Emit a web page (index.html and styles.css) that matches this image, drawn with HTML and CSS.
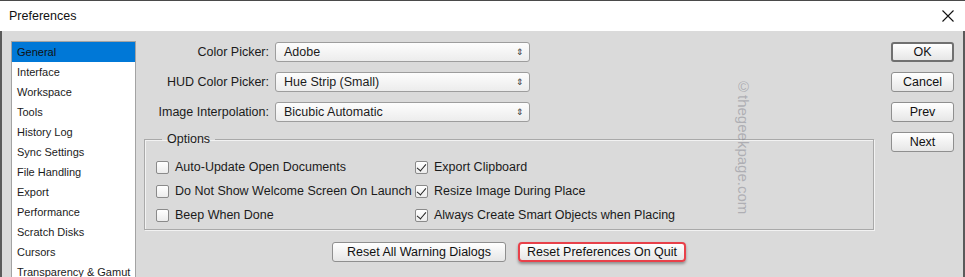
FILE: index.html
```html
<!DOCTYPE html>
<html lang="en">
<head>
    <meta charset="UTF-8">
    <title>Preferences</title>
    <link rel="stylesheet" href="styles.css">
</head>
<body>
    <div class="window">
        <div class="titlebar">
            <span class="title">Preferences</span>
            <svg class="close" width="12" height="12" viewBox="0 0 12 12"><path d="M0.5 0.5 L11.5 11.5 M11.5 0.5 L0.5 11.5" stroke="#111" stroke-width="1.1" fill="none"/></svg>
        </div>
        <div class="content">
            <ul class="sections">
                <li class="active">General</li>
                <li>Interface</li>
                <li>Workspace</li>
                <li>Tools</li>
                <li>History Log</li>
                <li>Sync Settings</li>
                <li>File Handling</li>
                <li>Export</li>
                <li>Performance</li>
                <li>Scratch Disks</li>
                <li>Cursors</li>
                <li>Transparency &amp; Gamut</li>
            </ul>

            <div class="main">
                <div class="field">
                    <label>Color Picker:</label>
                    <div class="select">Adobe <span class="arrow">&#8661;</span></div>
                </div>
                <div class="field">
                    <label>HUD Color Picker:</label>
                    <div class="select">Hue Strip (Small) <span class="arrow">&#8661;</span></div>
                </div>
                <div class="field">
                    <label>Image Interpolation:</label>
                    <div class="select">Bicubic Automatic <span class="arrow">&#8661;</span></div>
                </div>

                <fieldset class="options">
                    <legend>Options</legend>
                    <div class="checks">
                        <div class="check"><span class="box"></span>Auto-Update Open Documents</div>
                        <div class="check"><span class="box on"></span>Export Clipboard</div>
                        <div class="check"><span class="box"></span>Do Not Show Welcome Screen On Launch</div>
                        <div class="check"><span class="box on"></span>Resize Image During Place</div>
                        <div class="check"><span class="box"></span>Beep When Done</div>
                        <div class="check"><span class="box on"></span>Always Create Smart Objects when Placing</div>
                    </div>
                </fieldset>

                <div class="resets">
                    <button class="btn reset-warn">Reset All Warning Dialogs</button>
                    <button class="btn reset-prefs">Reset Preferences On Quit</button>
                </div>

                <div class="watermark">&copy;thegeekpage.com</div>
            </div>

            <div class="side">
                <button class="btn default">OK</button>
                <button class="btn">Cancel</button>
                <button class="btn">Prev</button>
                <button class="btn">Next</button>
            </div>
        </div>
    </div>
</body>
</html>
```

FILE: styles.css
```css
body{
    margin: 0;
    font-family: "Liberation Sans", Arial, sans-serif;
    color: #1b1b1b;
    background-color: #dadada;
    overflow: hidden;
}
.window{
    width: 965px;
    height: 277px;
    box-sizing: border-box;
    border-top: solid 1px #4a4a4a;
}
.titlebar{
    height: 30px;
    background-color: white;
    display: flex;
    align-items: center;
    justify-content: space-between;
    padding: 0 10px 0 9px;
}
.title{
    font-size: 12.5px;
    color: #111;
}
.close{
    margin-right: 1px;
    margin-top: -1px;
}
.content{
    height: 246px;
    box-sizing: border-box;
    border-left: solid 2px #5a5a5a;
    border-right: solid 2px #5a5a5a;
    padding: 10px 9px 0 9px;
    display: flex;
    overflow: hidden;
}
.sections{
    list-style: none;
    margin: 0;
    padding: 0;
    width: 125px;
    height: 260px;
    box-sizing: border-box;
    flex-shrink: 0;
    background-color: white;
    border: solid 1px #a3a3a3;
    font-size: 11px;
}
.sections>li{
    height: 20px;
    line-height: 20px;
    padding-left: 5px;
    white-space: nowrap;
}
.sections>li.active{
    background-color: #0078d7;
    color: #111;
}
.main{
    position: relative;
    width: 730px;
    margin-left: 8px;
    flex-shrink: 0;
    padding-top: 1px;
}
.field{
    display: flex;
    align-items: center;
    height: 20px;
    margin-bottom: 10px;
}
.field>label{
    width: 131px;
    text-align: right;
    font-size: 12.5px;
    padding-right: 6px;
    box-sizing: border-box;
}
.select{
    position: relative;
    width: 255px;
    height: 20px;
    box-sizing: border-box;
    border: solid 1px #9d9d9d;
    border-radius: 3px;
    background: linear-gradient(#fdfdfd, #ececec);
    font-size: 12.5px;
    line-height: 18px;
    padding-left: 8px;
}
.arrow{
    position: absolute;
    right: 5px;
    top: 0;
    font-size: 9px;
    color: #333;
}
.options{
    margin: -1px 0 0 0;
    padding: 8px 0 2px 11px;
    border: solid 1px #a9a9a9;
    box-shadow: 1px 1px 0 #f2f2f2, inset 1px 1px 0 #f2f2f2;
}
.options>legend{
    font-size: 12.5px;
    padding: 0 5px;
    margin-left: 6px;
    line-height: 16px;
}
.checks{
    display: grid;
    grid-template-columns: 259px auto;
}
.check{
    height: 24px;
    display: flex;
    align-items: center;
    font-size: 12.5px;
    white-space: nowrap;
}
.box{
    position: relative;
    width: 13px;
    height: 13px;
    box-sizing: border-box;
    border: solid 1px #8a8a8a;
    border-radius: 2px;
    background: linear-gradient(#ffffff, #ececec);
    margin-right: 6px;
}
.box.on::after{
    content: "";
    position: absolute;
    left: 3px;
    top: 0px;
    width: 4px;
    height: 8px;
    border-right: solid 1.6px #222;
    border-bottom: solid 1.6px #222;
    transform: rotate(40deg);
}
.resets{
    display: flex;
    justify-content: center;
    gap: 12px;
    margin-top: 12px;
}
.btn{
    height: 20px;
    box-sizing: border-box;
    border: solid 1px #8f8f8f;
    border-radius: 3px;
    background: linear-gradient(#ffffff, #e6e6e6);
    font-family: "Liberation Sans", Arial, sans-serif;
    font-size: 12.5px;
    color: #111;
    padding: 0;
    line-height: 18px;
}
.reset-warn{
    width: 174px;
}
.reset-prefs{
    width: 168px;
    border: solid 2px #e8414a;
    border-radius: 4px;
    line-height: 16px;
    box-shadow: 0 2px 3px rgba(0,0,0,0.35);
}
.watermark{
    position: absolute;
    left: 591px;
    top: 37px;
    writing-mode: vertical-rl;
    font-size: 15px;
    color: rgba(130,130,140,0.5);
}
.side{
    display: flex;
    flex-direction: column;
    gap: 10px;
    margin-left: 17px;
    padding-top: 1px;
}
.side>.btn{
    width: 63px;
    height: 20px;
}
.side>.btn.default{
    border: solid 2px #707070;
    line-height: 16px;
}
```
